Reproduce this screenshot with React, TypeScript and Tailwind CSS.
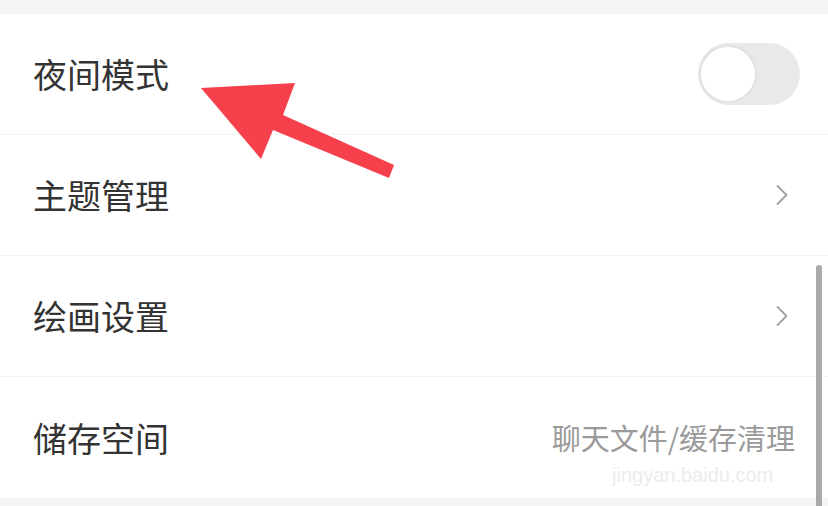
import { ChevronRight } from 'lucide-react'

const FONT = "font-['Noto_Sans_CJK_SC','Noto_Sans',sans-serif]"

function Row({ label, children, last }: { label: string; children?: React.ReactNode; last?: boolean }) {
  return (
    <div className={`flex h-[121px] items-center justify-between bg-white pl-[33px] pr-[28px] ${last ? '' : 'border-b border-[#f1f1f1]'}`}>
      <span className="text-[34px] leading-none text-[#333333]">{label}</span>
      {children}
    </div>
  )
}

function Chevron() {
  return <ChevronRight className="h-[36px] w-[36px] text-[#a0a0a0]" strokeWidth={1.2} />
}

export default function App() {
  return (
    <div className={`relative h-[506px] w-[828px] overflow-hidden bg-[#f5f5f5] ${FONT}`}>
      <div className="mt-[14px]">
        <Row label="夜间模式">
          <div className="flex h-[62px] w-[102px] items-center rounded-full bg-[#e9e9e9] pl-[1px]">
            <div className="h-[58px] w-[58px] rounded-full border-2 border-[#e2e2e2] bg-white" />
          </div>
        </Row>
        <Row label="主题管理">
          <Chevron />
        </Row>
        <Row label="绘画设置">
          <Chevron />
        </Row>
        <Row label="储存空间" last>
          <span className="mr-[5px] whitespace-nowrap text-[29px] leading-none text-[#9a9a9a]">聊天文件/缓存清理</span>
        </Row>
      </div>

      {/* watermark */}
      <span className="absolute left-[612px] top-[465px] whitespace-nowrap font-['Liberation_Sans',sans-serif] text-[20px] leading-none text-[#ececec]">
        jingyan.baidu.com
      </span>

      {/* scrollbar */}
      <div className="absolute left-[816px] top-[265px] h-[260px] w-[6px] rounded-full bg-[#a9a9a9]" />

      {/* red arrow */}
      <svg className="absolute left-0 top-0" width="828" height="506" viewBox="0 0 828 506">
        <polygon
          points="201,88 295,83 283,115 394,165 389,178 273,130 261,159"
          fill="#f6404c"
        />
      </svg>
    </div>
  )
}
